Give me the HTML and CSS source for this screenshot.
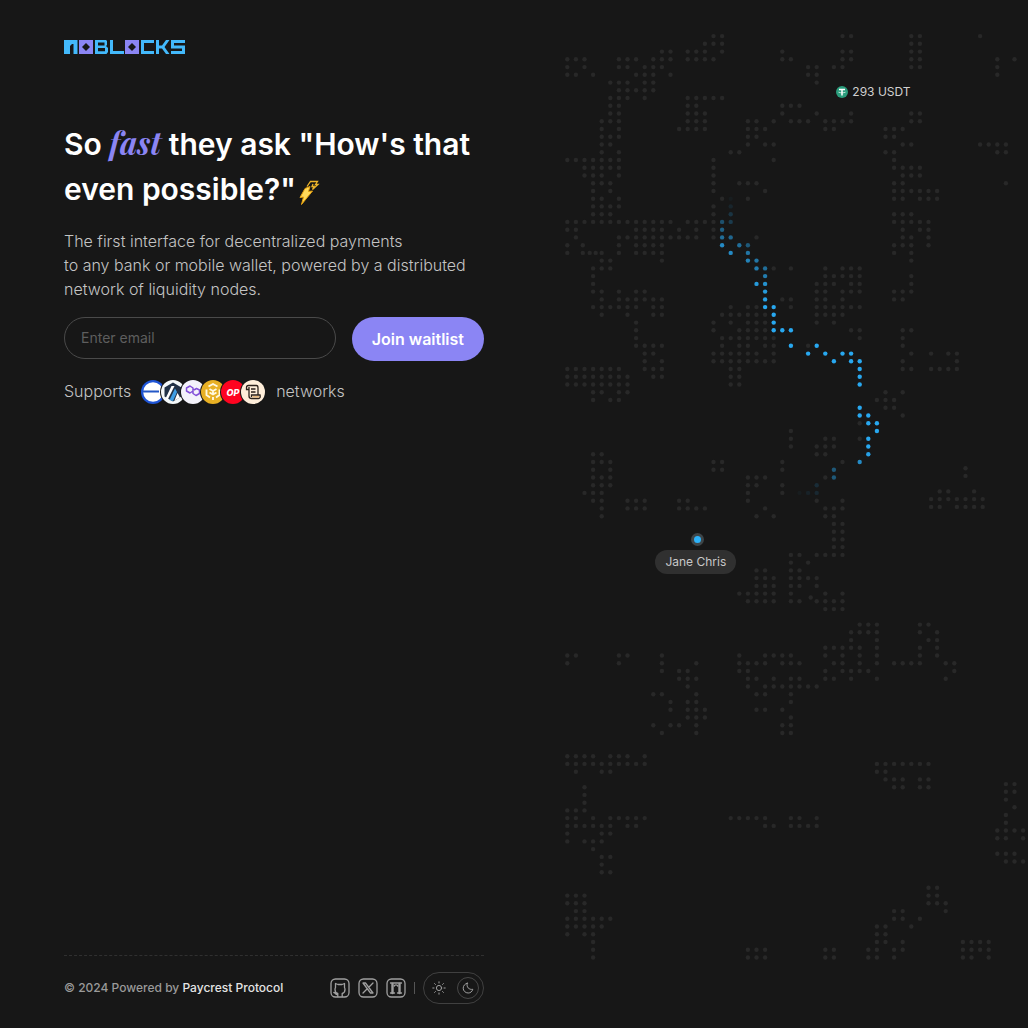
FILE: index.html
```html
<!DOCTYPE html>
<html lang="en">
<head>
<meta charset="utf-8">
<meta name="viewport" content="width=device-width, initial-scale=1">
<title>Noblocks</title>
<link rel="stylesheet" href="styles.css">
</head>
<body>
<div class="page">
  <div class="intro">
    <header class="header">
      <a class="logo" href="#" aria-label="Noblocks">
        <svg width="121" height="14" viewBox="0 0 121 14">
          <g fill="#43b9fb">
            <path d="M0 0H13.500V14H9.500V4H8L6 6V14H0Z"/>
            <path fill-rule="evenodd" d="M31 0H42L43 1V5L42 6L44 8V12L42.500 14H31ZM34 2.500V5.500H40.500V2.500ZM34 8V11.300H41V8Z"/>
            <path d="M46 0H49V11H60V14H46Z"/>
            <path d="M77 0H90V3H80V11H90V14H77Z"/>
            <path d="M92 0H95V5.500H98L102 0H105.500L100.500 7L105.500 14H102L98 8.500H95V14H92Z"/>
            <path d="M107 0H121V3H110V5.500H121V14H107V11H118V8.500H107Z"/>
          </g>
          <g fill="#8b85f4">
            <path fill-rule="evenodd" d="M15 0H29V14H15ZM22 3L18 7L22 11L26 7Z"/>
            <path fill-rule="evenodd" d="M61 0H75V14H61ZM68 3L64 7L68 11L72 7Z"/>
          </g>
        </svg>
      </a>
    </header>
    <main class="main">
      <h1 class="title">So <em class="accent">fast</em> they ask "How's that even possible?"<svg class="bolt" width="24" height="27" viewBox="0 0 24 27" aria-hidden="true"><path d="M8 9.500L13 7.500L11.500 12.500L15.500 12L4.500 25.500L6.500 18L3 18.500Z" fill="#ffd95a" stroke="#e8a20c" stroke-width="1"/><path d="M10 7.500L13.500 2.500H20.500L18.500 5.500H21L15.500 10.500L17 7.500H15L16 5" fill="none" stroke="#eeb52a" stroke-width="1.300"/></svg></h1>
      <p class="lead">The first interface for decentralized payments<br>to any bank or mobile wallet, powered by a distributed network of liquidity nodes.</p>
      <form class="form">
        <input class="email" type="email" placeholder="Enter email" aria-label="Email">
        <button class="join" type="button">Join waitlist</button>
      </form>
      <div class="supports">
        <span>Supports</span>
        <ul class="networks">
          <li><svg class="coin" viewBox="0 0 26 26" role="img" aria-label="Base"><circle cx="13" cy="13" r="12" fill="#1f55d6"/><circle cx="13" cy="13" r="9.800" fill="#fff"/><path d="M3 12.500H19" stroke="#2458c8" stroke-width="2"/></svg></li>
          <li><svg class="coin" viewBox="0 0 26 26" role="img" aria-label="Arbitrum"><circle cx="13" cy="13" r="12" fill="#f4f8fa"/><path d="M13 3.500L21.500 8.500V17.500L13 22.500L4.500 17.500V8.500Z" fill="#213147"/><path d="M5.500 19.500L11.500 7H14.500L7.500 21Z" fill="#fff"/><path d="M9.500 21L15 9.500L17 13L13 22Z" fill="#3c9de5"/><path d="M14.500 21.500L17.500 14L20 18.500Z" fill="#fff"/></svg></li>
          <li><svg class="coin" viewBox="0 0 26 26" role="img" aria-label="Polygon"><circle cx="13" cy="13" r="12" fill="#f4f2fb"/><path d="M13 12L10 14L6.500 12V9L10 7L13 9V14.500L16 16.500L19.500 14.500V11L16.500 9.500L14 11" fill="none" stroke="#8350d8" stroke-width="1.500" stroke-linejoin="round"/></svg></li>
          <li><svg class="coin" viewBox="0 0 26 26" role="img" aria-label="BNB Chain"><circle cx="13" cy="13" r="12" fill="#e8b024"/><path d="M8.500 7.500L13 5L17.500 7.500M6.500 10.500V16L10 18.500M19.500 10.500V16L16 18.500M9.500 10L13 12L16.500 10M13 12V15.500M9.500 13.500L13 15.500L16.500 13.500M13 18V21" fill="none" stroke="#fff8df" stroke-width="1.900"/></svg></li>
          <li><svg class="coin" viewBox="0 0 26 26" role="img" aria-label="Optimism"><circle cx="13" cy="13" r="12" fill="#ff0420"/><text x="13" y="16.500" text-anchor="middle" class="coin-text">OP</text></svg></li>
          <li><svg class="coin" viewBox="0 0 26 26" role="img" aria-label="Scroll"><circle cx="13" cy="13" r="12" fill="#ffeeda"/><path d="M9 10.500H6.500V8.500C6.500 6.500 7.500 6.500 8.500 6.500H16.500C18 6.500 18 7.500 18 9V15.500M9 8V17C9 19 10 19.500 11.500 19.500H18.500C20 19.500 20.500 18 20 16H11.500V18M11 10H15.500M11 13H15.500" fill="none" stroke="#2b211b" stroke-width="1.300"/><path d="M12.500 17H19V18.500H12.500Z" fill="#e8b77c"/></svg></li>
        </ul>
        <span>networks</span>
      </div>
    </main>
    <footer class="footer">
      <p class="copyright">© 2024 Powered by <a class="paycrest" href="#">Paycrest Protocol</a></p>
      <div class="tools">
        <a class="social" href="#" aria-label="GitHub"><svg width="20" height="20" viewBox="0 0 20 20"><rect x="1" y="1" width="18" height="18" rx="4.500"/><path d="M7.800 18.500V15.500C6 15 5 13.500 5 11.500C5 10.500 5.300 10 5.500 9.500V5.500L8 6.500H12L14.500 5.500V9.500C15 10.500 15 11 15 11.500C15 13.500 14 15 12.200 15.500V18.500M7.500 16.500C5.500 17 5.500 14.500 3.800 14.500"/></svg></a>
        <a class="social" href="#" aria-label="X"><svg width="20" height="20" viewBox="0 0 20 20"><rect x="1" y="1" width="18" height="18" rx="4.500"/><path d="M5 5H7.500L15 15H12.500ZM15 5L10.800 9.200M9 11L5 15"/></svg></a>
        <a class="social" href="#" aria-label="Paycrest"><svg width="20" height="20" viewBox="0 0 20 20"><rect x="1" y="1" width="18" height="18" rx="4.500"/><path d="M4.500 5H15.500M4.500 15H8.500M11.500 15H15.500"/><path d="M6.500 15V6M13.500 15V6" stroke-width="2.400"/><path d="M8.200 8C8.500 6.500 11.500 6.500 11.800 8"/></svg></a>
        <span class="divider"></span>
        <div class="theme" role="group" aria-label="Theme">
          <button class="mode" type="button" aria-label="Light"><svg width="14" height="14" viewBox="0 0 14 14"><circle cx="7" cy="7" r="2.600"/><path d="M7 .8V2M7 12V13.200M.8 7H2M12 7H13.200M2.600 2.600L3.400 3.400M10.600 10.600L11.400 11.400M2.600 11.400L3.400 10.600M10.600 3.400L11.400 2.600"/></svg></button>
          <button class="mode mode-on" type="button" aria-label="Dark"><svg width="14" height="14" viewBox="0 0 14 14"><path d="M6.300 2.200C5 6 8 9 11.800 8.300C11.200 10.600 9.400 12 7.200 12C4.400 12 2.200 9.800 2.200 7.200C2.200 4.700 4 2.700 6.300 2.200Z"/></svg></button>
        </div>
      </div>
    </footer>
  </div>
  <div class="visual">
    <div class="map">
      <svg class="dots" viewBox="0 0 464 932" aria-hidden="true"><g id="land"></g><g id="route"></g></svg>
      <div class="amount"><svg width="12" height="12" viewBox="0 0 12 12" aria-hidden="true"><circle cx="6" cy="6" r="6" fill="#2a9d7c"/><path d="M3 3.600H9M6 3.600V9.500" stroke="#fff" stroke-width="1.500"/><path d="M2.500 6.200C4.500 7 7.500 7 9.500 6.200" stroke="#fff" stroke-width=".7" fill="none"/></svg>293 USDT</div>
      <span class="pin"></span>
      <div class="person">Jane Chris</div>
    </div>
  </div>
</div>
<script src="map.js"></script>
</body>
</html>
```
FILE: styles.css
```css
* { box-sizing: border-box; }

body {
  margin: 0;
  background: #171717;
  color: #fff;
  font-family: Inter, "Liberation Sans", sans-serif;
}

a { color: inherit; text-decoration: none; }

.page {
  display: grid;
  grid-template-columns: 1fr 1fr;
  min-height: 100vh;
}

.intro {
  display: flex;
  flex-direction: column;
  padding: 40px 30px 24px 64px;
}

.logo { display: block; width: 121px; }
.logo svg, .coin, .social svg, .mode svg, .amount svg, .dots { display: block; }

.main {
  flex: 1;
  padding-top: 68px;
}

.title {
  margin: 0;
  font-size: 30px;
  line-height: 45px;
  font-weight: 600;
}

.accent {
  color: #8b85f4;
  font-family: "Playfair Display", "Liberation Serif", serif;
  font-size: 31px;
  line-height: 30px;
  font-weight: 700;
}

.bolt { margin-left: 1px; vertical-align: -6px; }

.lead {
  margin: 17px 0 16px;
  color: #c4c4c4;
  font-size: 16px;
  line-height: 24px;
  font-weight: 300;
}

.form {
  display: flex;
  align-items: flex-start;
  gap: 16px;
}

.email {
  flex: 1;
  min-width: 0;
  height: 42px;
  padding: 0 16px 2px;
  border: 1px solid #4a4a4a;
  border-radius: 21px;
  background: transparent;
  color: #fff;
  font: 14px/20px Inter, sans-serif;
}

.email::placeholder { color: #5e5e5e; }

.join {
  height: 44px;
  padding: 0 20px;
  border: 0;
  border-radius: 22px;
  background: #8b85f4;
  color: #fff;
  font: 600 16px/24px Inter, sans-serif;
}

.supports {
  display: flex;
  align-items: center;
  gap: 9px;
  margin-top: 16px;
  color: #c4c4c4;
  font-size: 16px;
  line-height: 24px;
  font-weight: 300;
}

.networks {
  display: flex;
  margin: 0;
  padding: 2px 7px 0 0;
  list-style: none;
}

.networks li { width: 20px; }

.coin {
  width: 26px;
  height: 26px;
  border-radius: 50%;
  background: #171717;
}

.coin-text {
  fill: #fff;
  font: italic 800 9px Inter, sans-serif;
}

.footer {
  display: flex;
  align-items: center;
  justify-content: space-between;
  padding-top: 16px;
  border-top: 1px dashed #303030;
}

.copyright {
  margin: 0;
  color: #9a9a9a;
  font-size: 12px;
  line-height: 18px;
  font-weight: 500;
}

.paycrest { color: #e4e4e4; }

.tools {
  display: flex;
  align-items: center;
  gap: 8px;
}

.social svg, .mode svg {
  fill: none;
  stroke: #a0a0a0;
  stroke-width: 1.3;
  stroke-linejoin: round;
  stroke-linecap: round;
}

.divider {
  width: 1px;
  height: 12px;
  background: #555;
}

.theme {
  display: flex;
  gap: 7px;
  padding: 4px;
  border: 1px solid #404040;
  border-radius: 16px;
}

.mode {
  display: grid;
  place-items: center;
  width: 22px;
  height: 22px;
  padding: 0;
  border: 1px solid transparent;
  border-radius: 50%;
  background: transparent;
}

.mode svg { stroke-width: 1; }
.mode-on { border-color: #484848; }

.visual { padding: 32px 0 0 50px; }

.map { position: relative; }

.dots { width: 100%; }
#land { fill: #282828; }
#route { fill: #28a8f0; }

.amount, .person, .pin { position: absolute; }

.amount {
  left: 58.7%;
  top: 5.5%;
  display: flex;
  align-items: center;
  gap: 4px;
  color: #d0d0d0;
  font-size: 12px;
  line-height: 18px;
}

.pin {
  left: 27.4%;
  top: 53.8%;
  width: 13px;
  height: 13px;
  border: 3px solid #3e4548;
  border-radius: 50%;
  background: #2db2f8;
}

.person {
  left: 19.7%;
  top: 55.6%;
  padding: 3px 10px;
  border-radius: 12px;
  background: #303030;
  color: #c8c8c8;
  font-size: 12px;
  line-height: 18px;
}
```
FILE: map.js
```js
// Each land row is "row: columns"; "a-b" is a run of neighbouring columns.
const land = `
0: 17 18 32 33 40 41 48
1: 16-18 40 41
2: 11 12 14-16 18 25 32 33 40 41
3: 0-2 6-8 10-12 14-17 25 26 32 33 40 41 50 52
4: 0 2 6 7 9-11 28 29 31 32 40 41 50
5: 0 1 3 8-10 12 28 29 50
6: 5-7 9 10 29
7: 6-10
8: 5-7 9 14-18
9: 5 6 14 15 25-27
10: 5 6 14-16 25 29 33 40 41
11: 4-6 14-16 21 22 24 26-28 30-33 40 41
12: 4 6 13-16 21-23 30 31 37-39
13: 4-6 21 22 37 38
14: 4 5 21 23 24 39 40 48-51
15: 4 6 19 20 37 38 50 51
16: 0-6 17 24 38
17: 2-6 17 38-41
18: 2-4 6 17 39-41
19: 3-5 17 20-22 38 39 51
20: 3 5 17 23 38-43
21: 3 4 6 18 21 38 39 41-43
22: 3-6 17
23: 3-5 17 38-40
24: 0-12 14-17 38-42
25: 0 1 8-11 13 15 17 39 41 42
26: 1 6-15 17 22 39 40 42
27: 0 1.8 6 8-11 38-40 42
28: 0 1.8 2.6 3.3 4 6 8-11 38 40
29: 4 5 11 40
30: 3-5 24 26 30 32-34
31: 3 30-34 40
32: 3 29-31 33 34 40
33: 3 4 6 8 9 29 30 32-34 38-40
34: 4 6-11 25 26 29 30 32 38 39
35: 3-8 10 11 19 21 22 26 29-34
36: 4 7 10 11 18-23 29-32
37: 8 17 19 21-23 29 31
38: 8 17 20-23 33 34 39 40
39: 8 18-24 34 39
40: 8-11 18 20 21 23 24 28 39
41: 9 10 17-22 24 40 42.3 44.3 45.3
42: 9 11 17-24 39 45.3
43: 0-6 9-11 19 20 39 40 42.3 43.3 44.3 45.3
44: 0-7 10 11 19 20
45: 0-7 19 20
46: 3 4 6 7 37 39
47: 3 5 6 36-38
48: 37 38
49: 39
50: 34
51: 26
52: 26 30 31 34
53: 26 29-31
54: 3 4 29 30
55: 3-5 17 18 25 32
55.8: 46.3
56: 3 5 17 18 25
56.8: 46.3
57: 3-5 21-23 30
58: 3-5 21 22 25
58.8: 43.3 44.3 47.3
59: 2-4 21 25
59.8: 42.3 43.3 44.3 45.3 46.3 47.3 48.3
60: 3 4 7-9 13 14 21 29 32
60.8: 42.3 43.3 45.3 46.3 47.3 48.3
61: 4 7-9 13-16 23 30-32
62: 4 22 24 30 31
63: 31 32
64: 31 32
65: 31 32
66: 31 32
67: 26 27 29-32
68: 26 28
69: 22 23 26 27
70: 22-24 26-29
71: 22-24 26 27 29
72: 20-24 26 30 32
72.5: 28.3
73: 21-24 26 27 29-32
74: 30-32
76: 34-36 41 42
77: 33-36 41 43
78: 33 36 42 43
79: 30-34 36 41 43
80: 0 1 6 7 11 20 23-26 30 32 34 36 41 43
81: 0 6 11 15 20-23 25-27 31 32 34 36 38-41 44 45
82: 11 13 14 20 21 30 32-35 45
83: 13-15 21 22 24 26 27 30 31 33 36 44
84: 14 21 23-29
85: 10 11 15 22 23 26
86: 12 14 15 26
87: 12 14-16 22 23 25
88: 14-16 26
89: 10 12 13 15 25 26
90: 11 15 25 26
93: 0-3 5-7 9
94: 0-9 36-42
95: 1 4 5 36 37
96: 37-39 41 42
96.6: 51 52
97: 2 38 39 41 42
97.6: 51 52
98: 2
98.6: 51
99: 2
99.6: 52
100: 0-2
100.6: 51
101: 0 1 3 5-9 19-23 26 27 29
101.6: 51
102: 0-5 7 8 23 24 26-29
102.6: 50-53
103: 0 4 5
103.6: 50 51 53
104: 0 2-4
105: 3
105.6: 50-52
106: 4 5
106.6: 51-53
107: 4
108: 4 5
110: 42 43
111: 0-2 42 43
112: 0-2 42-44
113: 1 2 38 39 44
114: 0-5 38 39 41
115: 0-4 36 37 40
116: 0 2 3 36 37
117: 3 36 37 39 46-49
118: 3 21-23 30 31 35 36 38 39 46-49
119: 3 21-23 30 31 35 36 38 46 47 49`;

// Route points: row, column, opacity. The line fades out at both ends.
const route = [
  [21, 19, .04], [22, 19, .1], [23, 19, .2], [24, 18, .4], [24, 19, .25],
  [25, 18, .5], [26, 18, .6], [26, 19, .55], [27, 18, .8], [27, 20, .6],
  [27, 21, .45], [28, 19, .8], [28, 21, .65], [29, 21, .75], [29, 22, .65],
  [30, 22, .7], [30, 23, .6], [31, 23, .7], [32, 22, .9], [32, 23, .85],
  [33, 23, .9], [34, 23, .95], [35, 23, 1], [35, 24, 1], [36, 24, 1],
  [37, 24, 1], [38, 24, 1], [38, 25, 1], [38, 26, 1], [40, 26, 1],
  [40, 29, 1], [41, 28, 1], [41, 30, 1], [41, 32, 1], [41, 33, 1],
  [42, 31, 1], [42, 33, 1], [42, 34, 1], [43, 34, 1], [44, 34, 1],
  [45, 34, 1], [48, 34, 1], [49, 34, 1], [49, 35, 1], [50, 35, 1],
  [50, 36, 1], [51, 36, 1], [52, 35, 1], [53, 35, 1], [54, 35, .95],
  [55, 34, .8], [56, 31, .45], [57, 31, .45], [58, 29, .15],
  [59, 27, .04], [59, 28, .08], [59, 29, .12]
];

function addDot(group, row, col, opacity) {
  const dot = document.createElementNS("http://www.w3.org/2000/svg", "circle");
  dot.setAttribute("cx", (3.3 + col * 8.6).toFixed(1));
  dot.setAttribute("cy", (4.1 + row * 7.743).toFixed(1));
  dot.setAttribute("r", 2.2);
  if (opacity < 1) dot.setAttribute("opacity", opacity);
  group.append(dot);
}

const landGroup = document.getElementById("land");
for (const line of land.trim().split("\n")) {
  const [row, cols] = line.split(": ");
  for (const part of cols.split(" ")) {
    const [from, to = from] = part.split("-").map(Number);
    for (let col = from; col <= to; col++) addDot(landGroup, +row, col, 1);
  }
}

const routeGroup = document.getElementById("route");
for (const [row, col, opacity] of route) addDot(routeGroup, row, col, opacity);
```
